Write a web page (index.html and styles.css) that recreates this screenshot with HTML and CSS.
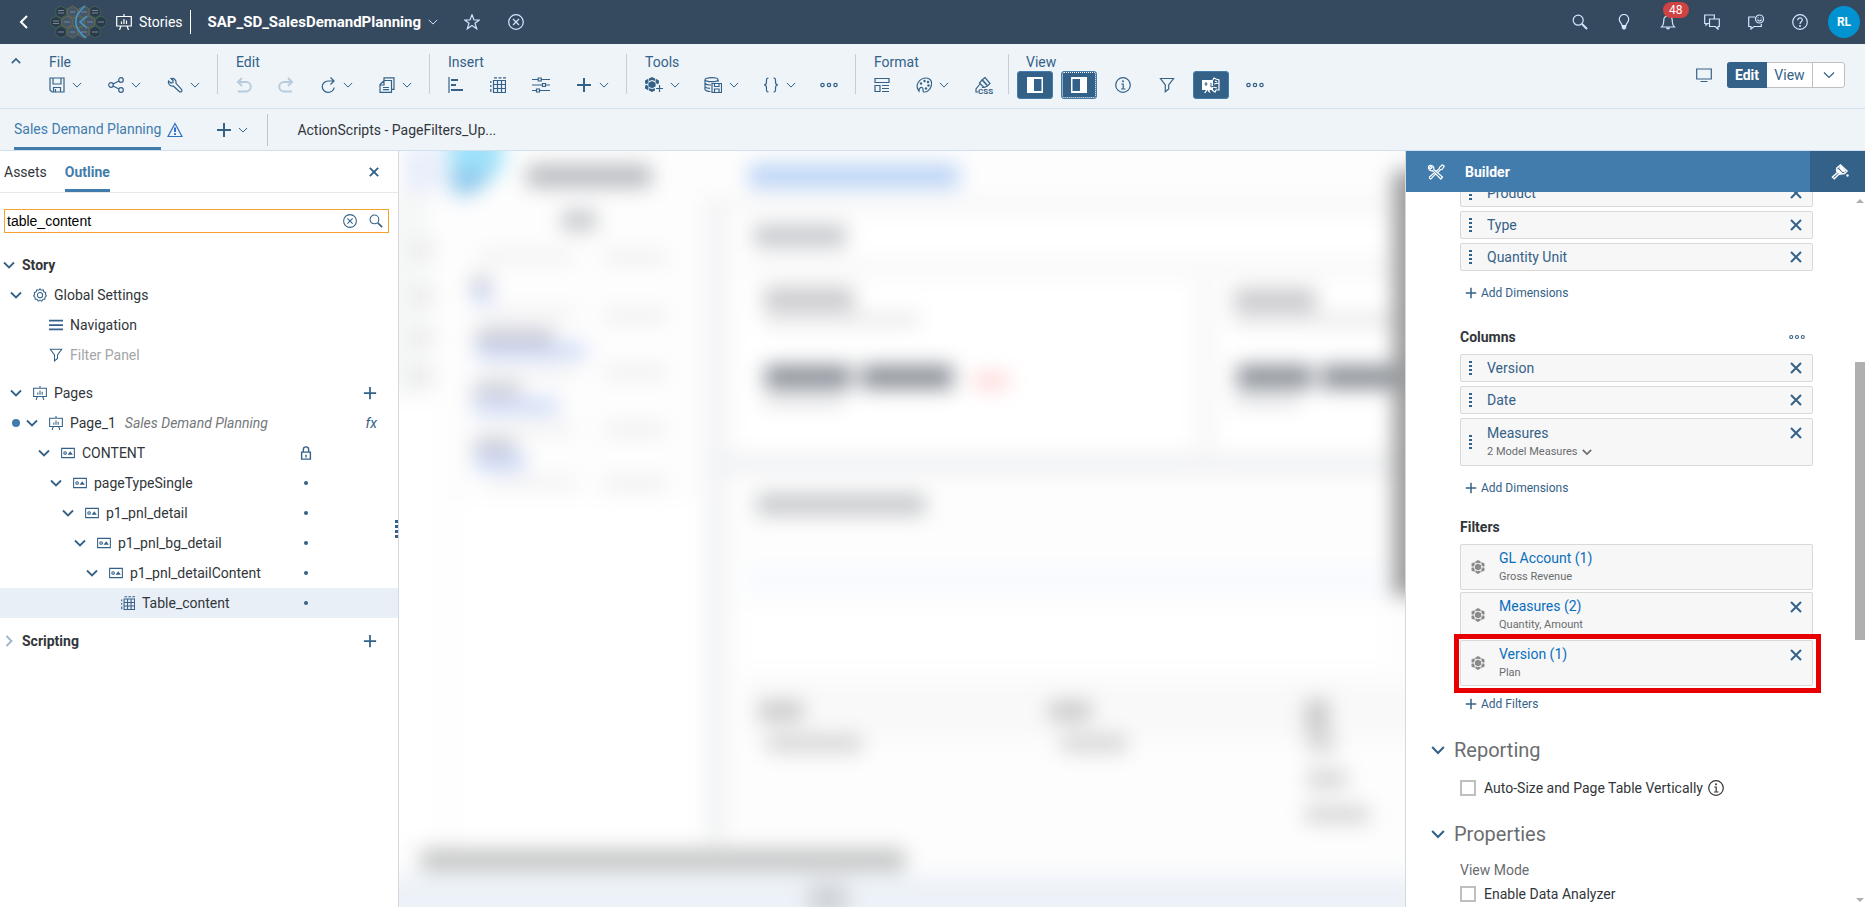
FILE: index.html
```html
<!DOCTYPE html>
<html lang="en">
<head>
<meta charset="utf-8">
<title>SAP_SD_SalesDemandPlanning</title>
<link rel="stylesheet" href="styles.css">
</head>
<body>
<svg class="sprite" aria-hidden="true">
  <symbol id="down" viewBox="0 0 12 12"><path d="M1 3.500l5 5 5-5"/></symbol>
  <symbol id="up" viewBox="0 0 12 12"><path d="M1 8.500l5-5 5 5"/></symbol>
  <symbol id="right" viewBox="0 0 12 12"><path d="M3.500 1l5 5-5 5"/></symbol>
  <symbol id="left" viewBox="0 0 16 16"><path d="M11 2L5 8l6 6"/></symbol>
  <symbol id="x" viewBox="0 0 12 12"><path d="M1 1l10 10M11 1L1 11"/></symbol>
  <symbol id="plus" viewBox="0 0 16 16"><path d="M8 1v14M1 8h14"/></symbol>
  <symbol id="dots" viewBox="0 0 18 16"><circle cx="2.500" cy="8" r="1.700"/><circle cx="9" cy="8" r="1.700"/><circle cx="15.500" cy="8" r="1.700"/></symbol>
  <symbol id="story" viewBox="0 0 16 16"><path d="M.7 2.500h14.600v9.500H.7zM8 0v2.500M5 12l-1.500 4M11 12l1.500 4M5.500 7.500V10M8 5v5M10.500 6.500V10"/></symbol>
  <symbol id="star" viewBox="0 0 16 16"><path d="M8 .8l2 5.200h5.300L11 9.300l1.700 5.500L8 11.500l-4.700 3.300L5 9.300.7 6H6z"/></symbol>
  <symbol id="cancel" viewBox="0 0 16 16"><circle cx="8" cy="8" r="7.300"/><path d="M5 5l6 6M11 5l-6 6"/></symbol>
  <symbol id="save" viewBox="0 0 16 16"><path d="M1 1h14v14H3l-2-2zM4 1v6h8V1M4.500 15v-4.500h7V15M6.500 12v3"/></symbol>
  <symbol id="share" viewBox="0 0 16 16"><circle cx="3" cy="8" r="2.300"/><circle cx="13" cy="3" r="2.300"/><circle cx="13" cy="13" r="2.300"/><path d="M5 7l6-3M5 9l6 3"/></symbol>
  <symbol id="wrench" viewBox="0 0 16 16"><path d="M4 1.500a4 4 0 0 1 5 4.800l5.500 6a1.500 1.500 0 0 1-2.200 2.200l-6-5.500A4 4 0 0 1 1.500 4L4 6l2-.5L6 3.500z"/></symbol>
  <symbol id="undo" viewBox="0 0 16 16"><path d="M6 1L2 5l4 4M2 5h8a4.500 4.500 0 0 1 0 9.500H2"/></symbol>
  <symbol id="redo" viewBox="0 0 16 16"><path d="M10 1l4 4-4 4M14 5H6a4.500 4.500 0 0 0 0 9.500h8"/></symbol>
  <symbol id="refresh" viewBox="0 0 16 16"><path d="M14 4H8a6 5.700 0 1 0 6.200 6.500M10.500 .5L14 4l-3.500 3.500"/></symbol>
  <symbol id="copy" viewBox="0 0 16 16"><path d="M5 3.500V.8h10v11.500h-2.500M8 3.500h4.500v11.800H1V7.500l4-4h3M5 4v4H1M4 10.500h6M4 12.700h6"/></symbol>
  <symbol id="chart" viewBox="0 0 16 16"><path d="M1 0v16"/><path class="fat" d="M3 3h7M3 8h5M3 13h12"/></symbol>
  <symbol id="table" viewBox="0 0 16 16"><path d="M3.500 3.500h12v12h-12zM3.500 7.500h12M3.500 11.500h12M7.500 3.500v12M11.500 3.500v12M4 .8h3M8.500 .8h3M13 .8h3M.8 4v2M.8 8v2M.8 12v3"/></symbol>
  <symbol id="sliders" viewBox="0 0 18 16"><path d="M0 2.500h6M9.500 2.500H18M0 8h10M14 8h4M0 13.500h4M8 13.500h10M6.200 1h3v3h-3zM10.500 6.500h3v3h-3zM4.500 12h3v3h-3z"/></symbol>
  <symbol id="cube" viewBox="0 0 14 14"><g class="solid"><path d="M7 0l2.600 1.400v2.200L7 2.700l-2.600.9V1.400zM7 14l2.600-1.400v-2.200l-2.600.9-2.600-.9v2.200zM.5 3.500l3-1.500.2 2.400-1.500 2.300-1.700-.5zM13.500 3.500l-3-1.500-.2 2.400 1.500 2.300 1.700-.5zM.5 10.500l3 1.500.2-2.400-1.500-2.300-1.700.5zM13.500 10.500l-3 1.500-.2-2.400 1.500-2.300 1.700.5zM7 3.500l3.200 1.700v3.600L7 10.500 3.800 8.800V5.200z"/></g></symbol>
  <symbol id="addcube" viewBox="0 0 18 16"><g class="solid"><path d="M7 0l3 1.500v2.600L7 3 4 4.100V1.500zM7 15l3-1.500v-2.300L7 12l-3-.8v2.300zM0 3.500l3.300-1.700.2 3L2 7.200.2 6.500zM14 3.500l-3.300-1.700-.2 3L12 7.200l1.800-.7zM0 11.500l3.300 1.700.2-3L2 7.800l-1.800.7zM7 4l3.600 1.800v3.700L7 11.200 3.400 9.500V5.800z"/></g><path d="M14.500 8v7M11 11.500h7"/></symbol>
  <symbol id="database" viewBox="0 0 18 16"><ellipse cx="7.500" cy="2.700" rx="6.500" ry="2"/><path d="M1 3v9.500c0 1 3 2 5.500 2M14 3v2M1 6.500c1 1 4 1.600 6 1.500M1 10c1 .8 3 1.300 5 1.300M8 6.500h9.500v9H8zM10.500 6.500v3h4.500v-3M10.500 15.500v-3.500h4.500v3.500"/></symbol>
  <symbol id="braces" viewBox="0 0 16 16"><path d="M5.500 1C3 1 3.500 3 3.500 5S3 8 1 8c2 0 2.500 1 2.500 3s-.5 4 2 4M10.500 1c2.500 0 2 2 2 4s.5 3 2.500 3c-2 0-2.500 1-2.500 3s.5 4-2 4"/></symbol>
  <symbol id="layout" viewBox="0 0 16 16"><path d="M1 1.500h14v4H1zM1 8.500h5v6H1zM8 8.500h7M8 11.500h7M8 14.500h7"/></symbol>
  <symbol id="palette" viewBox="0 0 16 16"><path d="M3 14C-2 8 4 1 10 1c4 0 6 3 5.500 6.500C15 12 12 15 8.500 15c-3 0 0-3.500-2.500-4.500C4 10 3 12 3 14z"/><g class="solid"><circle cx="5" cy="6.500" r="1.200"/><circle cx="8.500" cy="4" r="1.200"/><circle cx="12" cy="5" r="1.200"/><circle cx="12.500" cy="8.500" r="1.200"/><circle cx="10" cy="11.500" r="1.200"/></g></symbol>
  <symbol id="brush" viewBox="0 0 16 16"><path d="M7 3l3-2.500 5 6-2.500 2.500zM7 3L4.500 6 9 10.500 12.500 9M5 7l-4 5v3h3l4-5M8 3.500l4 4.500"/></symbol>
  <symbol id="paint" viewBox="0 0 18 16"><path stroke-width="1.500" d="M9.500 1l6.500 6-2.500 2.500-4 .5-4-4L6 4zM5.500 6.500l1 2L1.500 13l1.800 1.800L8 10l1.500.5M8.500 3.500l4 4.500"/><path class="fat" d="M9 2.500l5 5M6.500 5.500l4 4"/><circle class="solid" cx="16.500" cy="11.500" r="1.200"/></symbol>
  <symbol id="info" viewBox="0 0 16 16"><circle cx="8" cy="8" r="7.300"/><path d="M6.300 7H8.200v5M6 12h4.500"/><circle class="solid" cx="8" cy="4.200" r="1"/></symbol>
  <symbol id="filter" viewBox="0 0 16 16"><path d="M1.500 1.500h13L9.700 8v4L6.300 14.800V8z"/></symbol>
  <symbol id="paneL" viewBox="0 0 18 16"><path class="solid" d="M1 0h16v16H1zM8 2v12h7.500V2z" fill-rule="evenodd"/></symbol>
  <symbol id="paneR" viewBox="0 0 18 16"><path class="solid" d="M1 0h16v16H1zM2.500 2v12H10V2z" fill-rule="evenodd"/></symbol>
  <symbol id="present" viewBox="0 0 18 16"><path class="solid" d="M0 3h11v10H7.500l1 3-2-1-1-2-2 3H2l2-3H0z"/><path d="M11 3l1-2 2 1 3 1v10h-3l-1 2-3-2M12 7l5-1M11 10l4 1M13 4l2 1"/><path class="cut" d="M4 5v4M2.500 7h3M9 6v4l3-1"/></symbol>
  <symbol id="monitor" viewBox="0 0 16 16"><path d="M.7 2h14.600v10H.7zM4.500 14.500h7"/></symbol>
  <symbol id="search" viewBox="0 0 16 16"><circle cx="6.200" cy="6.200" r="5"/><path class="fat" d="M10 10l5 5"/></symbol>
  <symbol id="bulb" viewBox="0 0 16 16"><path d="M6 11.500C6 9 3.300 8.500 3.300 5.200a4.700 4.700 0 0 1 9.400 0C12.700 8.500 10 9 10 11.500z"/><path class="solid" d="M5.800 11h4.400v3L9 15.500H7L5.800 14z"/></symbol>
  <symbol id="bell" viewBox="0 0 16 16"><path d="M1.500 13C4 11 3.500 9 3.800 6a4.200 4.200 0 0 1 8.400 0c.3 3-.2 5 2.300 7z"/><path class="solid" d="M6 13.500h4a2 2 0 0 1-4 0z"/></symbol>
  <symbol id="chat" viewBox="0 0 16 16"><path d="M5 9.500H3.500L2 11V9.500H.7V1h9.600v3.500M5.500 5h9.800v7.500H14v2.700l-2.700-2.700H5.500z"/></symbol>
  <symbol id="feedback" viewBox="0 0 16 16"><path d="M7 3H.7v9.500H3V15l3-2.500h7.300V10"/><circle cx="11.500" cy="5" r="4"/><path d="M9.500 5.500c.8 2 3.200 2 4 0M10 3.500v.8M13 3.500v.8"/></symbol>
  <symbol id="help" viewBox="0 0 16 16"><circle cx="8" cy="8" r="7.300"/><path d="M5.700 6.200C5.700 3 10.500 3.200 10.300 6 10.200 7.800 8 7.700 8 10"/><circle class="solid" cx="8" cy="12" r="1"/></symbol>
  <symbol id="warn" viewBox="0 0 16 16"><path d="M8 1.500l7 13H1z"/><path class="fat" d="M8 5.500v4.500M8 11.300v1.700"/></symbol>
  <symbol id="gear" viewBox="0 0 16 16"><path d="M8 1l1.500 1.600 2.200-.5.700 2.200 2.100.8-.4 2.200L15.300 9l-1.600 1.500-.1 2.200-2.200.3L9.900 15 8 13.800 6.100 15l-1.500-2-2.200-.3-.1-2.200L.7 9l1.200-1.700-.4-2.200 2.100-.8.700-2.200 2.200.5z"/><circle cx="8" cy="8.200" r="3"/></symbol>
  <symbol id="menu" viewBox="0 0 16 16"><path class="fat" d="M0 3h16M0 8h16M0 13h16"/></symbol>
  <symbol id="panel" viewBox="0 0 16 16"><path d="M.7 2.700h14.600v10.600H.7z"/><circle cx="4.700" cy="8" r="1.500"/><path class="solid" d="M7.500 10L10.500 6l3 4z"/></symbol>
  <symbol id="lock" viewBox="0 0 12 16"><path d="M1 7h10v8H1zM3 7V4a3 3 0 0 1 6 0v3M6 10v3"/></symbol>
  <symbol id="tools" viewBox="0 0 18 16"><path d="M2.500 1.500a3.300 3.300 0 0 1 4.300 4l8.700 7.500-1.700 2-8.300-8.300a3.300 3.300 0 0 1-4-4L3.500 5 5 3.700zM15.500 .8l1.700 1.500-2 3-1.500.3-3 3M2 13.500l5.500-5M3.800 15.200l5-5.500M2 13.500l1.800 1.700M15.500 .8l-3 2.500-.2 1.500-3 2.500"/></symbol>
</svg>

<header class="shell">
  <button class="ib back" aria-label="Back"><svg class="i bold"><use href="#left"/></svg></button>
  <svg class="logo" viewBox="0 0 57 34" aria-hidden="true">
    <defs><path id="hex" d="M0-6l5.200 3v6L0 6l-5.200-3v-6z"/></defs>
    <g class="cells"><use href="#hex" x="11" y="7"/><use href="#hex" x="45" y="7"/><use href="#hex" x="6" y="17"/><use href="#hex" x="51" y="17"/><use href="#hex" x="11" y="27"/><use href="#hex" x="45" y="27"/></g>
    <g class="inner"><use href="#hex" x="22.500" y="7"/><use href="#hex" x="34" y="7"/><use href="#hex" x="17" y="17"/><use href="#hex" x="28" y="17"/><use href="#hex" x="39.500" y="17"/><use href="#hex" x="22.500" y="27"/><use href="#hex" x="34" y="27"/></g>
    <path class="labels" d="M8 5.500h6M8 8h6M20 7h5M31 7h6M42 5.500h6M42 8h6M3 16h6M3 18.500h6M14 17h6M37 17h6M48 17h6M8 27h6M20 27h5M31 27h6M42 27h6"/>
    <path class="strand" d="M35 1C23 11 22 22 36 33M37 11l-7 6 7 6"/>
  </svg>
  <a class="crumb" href="#"><svg class="i"><use href="#story"/></svg>Stories</a>
  <h1 class="title">SAP_SD_SalesDemandPlanning</h1>
  <button class="ib after" aria-label="Story menu"><svg class="chev"><use href="#down"/></svg></button>
  <button class="ib fav" aria-label="Favorite"><svg class="i"><use href="#star"/></svg></button>
  <button class="ib" aria-label="Close"><svg class="i"><use href="#cancel"/></svg></button>
  <nav class="actions" aria-label="Shell">
    <button class="ib" aria-label="Search"><svg class="i"><use href="#search"/></svg></button>
    <button class="ib" aria-label="Tips"><svg class="i"><use href="#bulb"/></svg></button>
    <button class="ib bell" aria-label="Notifications"><svg class="i"><use href="#bell"/></svg><span class="badge">48</span></button>
    <button class="ib" aria-label="Discussions"><svg class="i"><use href="#chat"/></svg></button>
    <button class="ib" aria-label="Feedback"><svg class="i"><use href="#feedback"/></svg></button>
    <button class="ib" aria-label="Help"><svg class="i"><use href="#help"/></svg></button>
    <button class="avatar">RL</button>
  </nav>
</header>

<div class="toolbar">
  <button class="ib collapse" aria-label="Collapse toolbar"><svg class="chev bold"><use href="#up"/></svg></button>
  <section class="group"><h2>File</h2><div class="tools">
    <button aria-label="Save"><svg class="i"><use href="#save"/></svg><svg class="chev"><use href="#down"/></svg></button>
    <button aria-label="Share"><svg class="i"><use href="#share"/></svg><svg class="chev"><use href="#down"/></svg></button>
    <button aria-label="Settings"><svg class="i"><use href="#wrench"/></svg><svg class="chev"><use href="#down"/></svg></button>
  </div></section>
  <section class="group"><h2>Edit</h2><div class="tools">
    <button disabled aria-label="Undo"><svg class="i bold"><use href="#undo"/></svg></button>
    <button disabled aria-label="Redo"><svg class="i bold"><use href="#redo"/></svg></button>
    <button aria-label="Refresh"><svg class="i"><use href="#refresh"/></svg><svg class="chev"><use href="#down"/></svg></button>
    <button aria-label="Copy"><svg class="i"><use href="#copy"/></svg><svg class="chev"><use href="#down"/></svg></button>
  </div></section>
  <section class="group"><h2>Insert</h2><div class="tools">
    <button aria-label="Chart"><svg class="i"><use href="#chart"/></svg></button>
    <button aria-label="Table"><svg class="i"><use href="#table"/></svg></button>
    <button aria-label="Input control"><svg class="i wide"><use href="#sliders"/></svg></button>
    <button aria-label="Add"><svg class="i bold"><use href="#plus"/></svg><svg class="chev"><use href="#down"/></svg></button>
  </div></section>
  <section class="group"><h2>Tools</h2><div class="tools tight">
    <button aria-label="Add dimension"><svg class="i wide"><use href="#addcube"/></svg><svg class="chev"><use href="#down"/></svg></button>
    <button aria-label="Data"><svg class="i wide"><use href="#database"/></svg><svg class="chev"><use href="#down"/></svg></button>
    <button aria-label="Scripts"><svg class="i"><use href="#braces"/></svg><svg class="chev"><use href="#down"/></svg></button>
    <button aria-label="More tools"><svg class="i wide"><use href="#dots"/></svg></button>
  </div></section>
  <section class="group"><h2>Format</h2><div class="tools">
    <button aria-label="Layout"><svg class="i"><use href="#layout"/></svg></button>
    <button aria-label="Theme"><svg class="i"><use href="#palette"/></svg><svg class="chev"><use href="#down"/></svg></button>
    <button class="css" aria-label="CSS"><svg class="i"><use href="#brush"/></svg><span>CSS</span></button>
  </div></section>
  <section class="group last"><h2>View</h2><div class="tools toggles">
    <button class="on" aria-label="Left panel" aria-pressed="true"><svg class="i wide"><use href="#paneL"/></svg></button>
    <button class="on focus" aria-label="Right panel" aria-pressed="true"><svg class="i wide"><use href="#paneR"/></svg></button>
    <button aria-label="Info"><svg class="i"><use href="#info"/></svg></button>
    <button aria-label="Filter"><svg class="i"><use href="#filter"/></svg></button>
    <button class="on" aria-label="Story preview" aria-pressed="true"><svg class="i wide"><use href="#present"/></svg></button>
    <button aria-label="More views"><svg class="i wide"><use href="#dots"/></svg></button>
  </div></section>
  <div class="mode">
    <button class="ib" aria-label="Device preview"><svg class="i"><use href="#monitor"/></svg></button>
    <div class="seg"><button class="on">Edit</button><button>View</button><button class="drop" aria-label="View options"><svg class="chev"><use href="#down"/></svg></button></div>
  </div>
</div>

<nav class="tabs" aria-label="Story pages">
  <a class="tab active" href="#">Sales Demand Planning</a>
  <svg class="i warn"><use href="#warn"/></svg>
  <button class="ib addtab" aria-label="Add page"><svg class="i bold"><use href="#plus"/></svg><svg class="chev"><use href="#down"/></svg></button>
  <a class="tab script" href="#">ActionScripts - PageFilters_Up...</a>
</nav>

<main class="work">
  <aside class="outline">
    <div class="ptabs">
      <a href="#">Assets</a><a class="active" href="#">Outline</a>
      <button class="ib" aria-label="Close panel"><svg class="close"><use href="#x"/></svg></button>
    </div>
    <div class="find">
      <input type="text" aria-label="Search outline" value="table_content">
      <button class="ib" aria-label="Clear"><svg class="ti"><use href="#cancel"/></svg></button>
      <button class="ib" aria-label="Search"><svg class="ti"><use href="#search"/></svg></button>
    </div>
    <ul class="tree">
      <li class="root"><svg class="tc"><use href="#down"/></svg><b>Story</b></li>
      <li class="l0"><svg class="tc"><use href="#down"/></svg><svg class="ti"><use href="#gear"/></svg><span>Global Settings</span></li>
      <li class="l1"><svg class="tc none"></svg><svg class="ti"><use href="#menu"/></svg><span>Navigation</span></li>
      <li class="l1"><svg class="tc none"></svg><svg class="ti"><use href="#filter"/></svg><span class="off">Filter Panel</span></li>
      <li class="l0 apart"><svg class="tc"><use href="#down"/></svg><svg class="ti"><use href="#story"/></svg><span>Pages</span><button class="ib end" aria-label="Add page"><svg class="ti bold"><use href="#plus"/></svg></button></li>
      <li class="l1 page"><i class="changed"></i><svg class="tc"><use href="#down"/></svg><svg class="ti"><use href="#story"/></svg><span>Page_1</span><em>Sales Demand Planning</em><button class="ib end fx">fx</button></li>
      <li class="l2"><svg class="tc"><use href="#down"/></svg><svg class="ti"><use href="#panel"/></svg><span>CONTENT</span><svg class="lock"><use href="#lock"/></svg></li>
      <li class="l3"><svg class="tc"><use href="#down"/></svg><svg class="ti"><use href="#panel"/></svg><span>pageTypeSingle</span><i class="dot"></i></li>
      <li class="l4"><svg class="tc"><use href="#down"/></svg><svg class="ti"><use href="#panel"/></svg><span>p1_pnl_detail</span><i class="dot"></i></li>
      <li class="l5"><svg class="tc"><use href="#down"/></svg><svg class="ti"><use href="#panel"/></svg><span>p1_pnl_bg_detail</span><i class="dot"></i></li>
      <li class="l6"><svg class="tc"><use href="#down"/></svg><svg class="ti"><use href="#panel"/></svg><span>p1_pnl_detailContent</span><i class="dot"></i></li>
      <li class="l7 sel"><svg class="tc none"></svg><svg class="ti"><use href="#table"/></svg><span>Table_content</span><i class="dot"></i></li>
      <li class="root apart"><svg class="tc pale"><use href="#right"/></svg><b>Scripting</b><button class="ib end" aria-label="Add script"><svg class="ti bold"><use href="#plus"/></svg></button></li>
    </ul>
    <div class="grip"><i></i><i></i><i></i><i></i></div>
  </aside>

  <div class="canvas">
    <svg viewBox="0 0 1006 756" preserveAspectRatio="xMinYMin slice" role="img" aria-label="Story page, blurred">
      <defs><filter id="soft" filterUnits="userSpaceOnUse" x="-60" y="-60" width="1130" height="880" color-interpolation-filters="sRGB"><feGaussianBlur stdDeviation="10"/></filter></defs>
      <rect width="1006" height="756" fill="#fdfdfd"/>
      <g filter="url(#soft)">
        <path fill="#fdfdfd" d="M-60-60h1130v880H-60z"/>
        <path fill="#f6f7f7" d="M-30 40h60v205h-60z"/>
        <path fill="#fff" d="M60 350h240v350H60zM-30 250h70v440h-70z"/>
        <path fill="#f1f2f4" d="M308 45h18v645h-18zM320 303h750v20H320z"/>
        <path fill="#f7f7f7" d="M320 46h750v15H320zM350 110h710v12H350z"/>
        <path fill="#f9f9f9" d="M350 530h710v60H350z"/>
        <path fill="#fff" d="M340 132h455v166H340zM340 65h720v40H340zM345 460h640v55H345z"/>
        <path fill="#f7f7f7" d="M798 130h18v170h-18z"/>
        <path fill="#fff" d="M820 132h250v166H820z"/>
        <path fill="#f8fafe" d="M350 415h710v28H350z"/>
        <path fill="#e9eefb" d="M5-5h40v45H5z"/>
        <path fill="#9fe2fa" d="M46-30h58V16L90 30 54 32z"/>
        <path fill="#8fc8ec" d="M50 18h38v14L72 44H55z"/>
        <path fill="#b7b9be" d="M128 14h124v22H128z"/>
        <path fill="#bcd4f6" d="M350 13h210v24H350z"/>
        <path fill="#c6c8cc" d="M163 59h34v21h-34zM355 74h92v22h-92z"/>
        <path fill="#e9e9eb" d="M80 102h95v7H80zM205 102h62v9h-62zM80 160h95v7H80zM205 160h62v9h-62zM80 217h95v7H80zM205 217h62v9h-62zM80 274h95v7H80zM205 274h62v9h-62zM90 328h85v7H90zM205 328h62v9h-62z"/>
        <path fill="#c8c9d2" d="M73 125h18v13H73zM77 178h78v15H77zM74 232h48v13H74zM74 288h42v13H74z"/>
        <path fill="#c8d5f5" d="M74 138h18v14H74zM77 193h110v14H77zM74 248h85v14H74zM76 302h50v17H76z"/>
        <path fill="#e6e6e6" d="M12 92h22v14H12zM12 138h22v14H12zM12 180h22v14H12zM10 218h24v15H10z"/>
        <path fill="#c8c8cc" d="M365 137h90v22h-90zM835 138h82v22h-82z"/>
        <path fill="#dedfe0" d="M365 164h155v9H365zM835 164h165v9H835z"/>
        <path fill="#8c9199" d="M366 214h86v24h-86zM462 214h92v24h-92zM838 214h75v24h-75zM922 214h90v24h-90z"/>
        <path fill="#ffd0d0" d="M575 223h34v14h-34z"/>
        <path fill="#dddee0" d="M365 246h80v9H365zM835 246h65v9h-65z"/>
        <path fill="#c5c7ca" d="M358 343h168v21H358z"/>
        <path fill="#c9c9c9" d="M360 550h44v20H360zM650 550h42v20H650zM906 548h24v34h-24z"/>
        <path fill="#d4d4d4" d="M368 584h95v17H368zM662 584h66v17H662zM908 584h28v17H908zM908 619h40v18h-40zM906 655h64v17h-64z"/>
        <path fill="#edf2f8" d="M-50 724h1110v80H-50z"/>
        <path fill="#c3c4c4" d="M22 698h484v22H22z"/>
        <path fill="#d0d3d8" d="M410 732h38v32h-38z"/>
        <path fill="#9c9c9c" d="M994 20h56v425h-56z"/>
      </g>
    </svg>
  </div>

  <aside class="builder">
    <div class="bhead">
      <svg class="i wide"><use href="#tools"/></svg><h2>Builder</h2>
      <button aria-label="Styling"><svg class="i wide"><use href="#paint"/></svg></button>
    </div>
    <div class="bbody">
      <div class="form">
        <ul class="dims top">
          <li><i class="drag"></i><span>Product</span><button class="ib" aria-label="Remove Product"><svg class="del"><use href="#x"/></svg></button></li>
          <li><i class="drag"></i><span>Type</span><button class="ib" aria-label="Remove Type"><svg class="del"><use href="#x"/></svg></button></li>
          <li><i class="drag"></i><span>Quantity Unit</span><button class="ib" aria-label="Remove Quantity Unit"><svg class="del"><use href="#x"/></svg></button></li>
        </ul>
        <button class="add"><svg class="ps"><use href="#plus"/></svg>Add Dimensions</button>
        <div class="sub"><h3>Columns</h3><button class="ib" aria-label="Column options"><svg class="i"><use href="#dots"/></svg></button></div>
        <ul class="dims">
          <li><i class="drag"></i><span>Version</span><button class="ib" aria-label="Remove Version"><svg class="del"><use href="#x"/></svg></button></li>
          <li><i class="drag"></i><span>Date</span><button class="ib" aria-label="Remove Date"><svg class="del"><use href="#x"/></svg></button></li>
          <li class="tall"><i class="drag"></i><span>Measures<small>2 Model Measures <svg class="sc"><use href="#down"/></svg></small></span><button class="ib" aria-label="Remove Measures"><svg class="del"><use href="#x"/></svg></button></li>
        </ul>
        <button class="add"><svg class="ps"><use href="#plus"/></svg>Add Dimensions</button>
        <div class="sub"><h3>Filters</h3></div>
        <ul class="filters">
          <li><svg class="cube"><use href="#cube"/></svg><div><a href="#">GL Account (1)</a><small>Gross Revenue</small></div></li>
          <li><svg class="cube"><use href="#cube"/></svg><div><a href="#">Measures (2)</a><small>Quantity, Amount</small></div><button class="ib" aria-label="Remove Measures filter"><svg class="del"><use href="#x"/></svg></button></li>
          <li class="marked"><svg class="cube"><use href="#cube"/></svg><div><a href="#">Version (1)</a><small>Plan</small></div><button class="ib" aria-label="Remove Version filter"><svg class="del"><use href="#x"/></svg></button></li>
        </ul>
        <button class="add"><svg class="ps"><use href="#plus"/></svg>Add Filters</button>
        <h2 class="sect"><svg class="hc"><use href="#down"/></svg>Reporting</h2>
        <div class="opt"><input type="checkbox" id="autosize"><label for="autosize">Auto-Size and Page Table Vertically</label><svg class="i about"><use href="#info"/></svg></div>
        <h2 class="sect second"><svg class="hc"><use href="#down"/></svg>Properties</h2>
        <p class="vm">View Mode</p>
        <div class="opt"><input type="checkbox" id="analyzer"><label for="analyzer">Enable Data Analyzer</label></div>
        <div class="opt"><input type="checkbox" aria-label="Enable Explorer"></div>
      </div>
      <div class="scroll"><i class="arr"></i><div class="track"><i class="thumb"></i></div><i class="arr dn"></i></div>
    </div>
  </aside>
</main>
</body>
</html>
```
FILE: styles.css
```css
* { box-sizing: border-box; }
html, body { height: 100%; }
body { margin: 0; display: flex; flex-direction: column; overflow: hidden; background: #fff; color: #32363a; font: 14px/20px Roboto, "Noto Sans", sans-serif; }
h1, h2, h3, p, ul { margin: 0; padding: 0; font-size: 14px; font-weight: 400; }
ul { list-style: none; }
a { color: inherit; text-decoration: none; }
button { margin: 0; padding: 0; border: 0; background: none; color: inherit; font: inherit; display: flex; align-items: center; justify-content: center; }
svg { flex: none; fill: none; stroke: currentColor; stroke-width: 1.2; }
.sprite { position: absolute; width: 0; height: 0; }
.solid { fill: currentColor; stroke: none; }
.fat { stroke-width: 2; }
.cut { stroke: #346187; stroke-width: 1; }
.i { width: 16px; height: 16px; }
.wide { width: 18px; }
.bold { stroke-width: 2; }
.chev { width: 10px; height: 10px; }

.shell { flex: none; display: flex; align-items: center; height: 44px; padding: 0 5px 0 16px; background: #354a5f; color: #fff; }
.logo { width: 57px; height: 34px; margin-left: 18px; stroke-width: 1; }
.cells { fill: #2a3a4c; stroke: #3d6350; }
.inner { fill: #44566a; stroke: #6b6a4e; }
.labels { stroke: #7b8793; }
.strand { stroke: #3d9fd6; stroke-width: 1.5; }
.crumb { display: flex; align-items: center; gap: 7px; margin-left: 9px; padding-right: 7px; line-height: 24px; border-right: 1px solid #fff; }
.title { margin-left: 17px; font-size: 15px; font-weight: 700; }
.after { margin-left: 7px; }
.fav { margin: 0 28px 0 26px; }
.shell .ib { color: #d1e8ff; }
.shell .back { color: #fff; }
.actions { display: flex; align-items: center; gap: 12px; margin-left: auto; }
.actions .ib { width: 32px; height: 32px; }
.bell { position: relative; }
.badge { position: absolute; left: 11px; top: -4px; padding: 0 6px; border-radius: 8px; background: #d04343; color: #fff; font: 12px/16px Roboto, sans-serif; }
.avatar { width: 32px; height: 32px; border-radius: 50%; background: #0092d1; font-size: 12px; font-weight: 700; }

.toolbar { flex: none; display: flex; height: 65px; background: #eff4f9; color: #346187; border-bottom: 1px solid #d1e0ee; }
.collapse { width: 31px; height: 34px; }
.group { padding: 0 17px 0 18px; margin: 10px 0 14px; height: 40px; border-right: 1px solid #c8cdd3; }
.group h2 { height: 16px; line-height: 16px; }
.tools { display: flex; align-items: center; gap: 26px; height: 28px; margin-top: 1px; }
.tools button { gap: 7px; height: 28px; }
.tools.tight { gap: 24px; }
.tools button:disabled { color: #b8cbdc; }
.css { position: relative; }
.css span { position: absolute; left: 3px; bottom: 4px; background: #eff4f9; font-size: 8px; line-height: 7px; font-weight: 700; }
.last { border: 0; padding: 0 0 0 8px; }
.last h2 { padding-left: 9px; }
.tools.toggles { gap: 8px; }
.toggles button { width: 36px; }
.toggles .on { background: #346187; color: #fff; border: 1px solid #427cac; border-radius: 3px; }
.toggles .focus { outline: 1px dotted #fff; outline-offset: -2px; }
.mode { display: flex; align-items: center; gap: 15px; margin: 18px 20px 20px auto; height: 26px; }
.seg { display: flex; height: 26px; border: 1px solid #bfbfbf; border-radius: 3px; background: #fff; }
.seg button { width: 45px; }
.seg .on { width: 40px; margin: -1px 0 -1px -1px; background: #346187; color: #fff; border-radius: 3px 0 0 3px; font-weight: 700; }
.seg .drop { width: 32px; border-left: 1px solid #bfbfbf; }
.seg .chev { width: 12px; height: 12px; }

.tabs { flex: none; display: flex; align-items: center; height: 42px; padding-left: 14px; background: #eff4f9; border-bottom: 1px solid #d1e0ee; }
.tab.active { height: 41px; line-height: 41px; color: #427cac; border-bottom: 3px solid #427cac; }
.warn { margin-left: 6px; color: #2f6fc4; }
.addtab { gap: 6px; margin-left: 33px; padding-right: 19px; height: 32px; color: #346187; border-right: 1px solid #bfc5cc; }
.script { margin-left: 29px; }

.work { flex: 1; display: flex; min-height: 0; }
.outline { position: relative; flex: none; width: 399px; border-right: 1px solid #d5d9dd; }
.ptabs { display: flex; gap: 18px; height: 42px; padding: 0 19px 0 4px; line-height: 42px; border-bottom: 1px solid #e8e8e8; }
.ptabs .active { color: #427cac; font-weight: 700; border-bottom: 3px solid #427cac; }
.ptabs button { margin-left: auto; color: #346187; }
.close { width: 10px; height: 10px; stroke-width: 2.2; }
.find { display: flex; align-items: center; gap: 12px; height: 24px; margin: 16px 9px 17px 4px; padding-right: 5px; border: 1px solid #f5a32d; color: #346187; }
.find input { flex: 1; min-width: 0; padding: 0 2px; border: 0; outline: 0; color: #000; background: none; font: 14px "Liberation Sans", sans-serif; }
.ti { width: 14px; height: 14px; color: #346187; }
.tc { width: 12px; height: 12px; margin-right: 11px; stroke-width: 1.800; color: #346187; }
.none { visibility: hidden; }
.pale { color: #9db3c9; }
.tree li { position: relative; display: flex; align-items: center; height: 30px; padding-right: 21px; }
.tree .apart { margin-top: 8px; }
.tree span { margin-left: 7px; }
.tree .root { padding-left: 3px; }
.root .tc { margin-right: 7px; }
.tree .l0 { padding-left: 10px; }
.tree .l1 { padding-left: 26px; }
.tree .l2 { padding-left: 38px; }
.tree .l3 { padding-left: 50px; }
.tree .l4 { padding-left: 62px; }
.tree .l5 { padding-left: 74px; }
.tree .l6 { padding-left: 86px; }
.tree .l7 { padding-left: 98px; }
.tree .page { padding-left: 12px; }
.changed { width: 8px; height: 8px; margin-right: 6px; border-radius: 50%; background: #427cac; }
.tree em { margin-left: 9px; color: #74777a; }
.off { color: #a3a5a7; }
.end { margin-left: auto; color: #346187; }
.fx { font-style: italic; }
.lock { width: 12px; height: 14px; margin: 0 65px 0 auto; stroke-width: 1.600; color: #346187; }
.dot { width: 4px; height: 4px; margin: 0 69px 0 auto; border-radius: 50%; background: #346187; }
.sel { background: #e8eff7; }
.grip { position: absolute; right: 0; top: 0; bottom: 0; display: flex; flex-direction: column; justify-content: center; gap: 2px; }
.grip i { width: 3px; height: 3px; background: #346187; }

.canvas { flex: 1; min-width: 0; overflow: hidden; }
.canvas svg { display: block; width: 100%; height: 100%; stroke: none; }

.builder { flex: none; display: flex; flex-direction: column; width: 460px; border-left: 1px solid #d5d9dd; background: #fff; }
.bhead { flex: none; display: flex; align-items: center; height: 41px; padding-left: 21px; background: #427cac; color: #fff; }
.bhead h2 { margin-left: 20px; font-weight: 700; }
.bhead button { width: 55px; height: 41px; margin-left: auto; padding-left: 4px; background: #346187; }
.bbody { flex: 1; display: flex; min-height: 0; overflow: hidden; }
.form { flex: 1; padding: 0 42px 0 54px; }
.dims { display: flex; flex-direction: column; gap: 4px; }
.top { margin-top: -13px; }
.dims li, .filters li { display: flex; align-items: center; min-height: 28px; padding-right: 10px; background: #f7f7f7; border: 1px solid #d9d9d9; border-radius: 2px; color: #346187; }
.dims span { flex: 1; margin-left: 15px; }
.dims .tall { height: 48px; }
.tall .ib, .filters .ib { align-self: flex-start; margin-top: 8px; }
.dims small, .filters small { display: block; font-size: 11px; line-height: 18px; color: #6a6d70; }
.drag { width: 3px; height: 14px; margin-left: 8px; background: repeating-linear-gradient(#346187 0 2px, transparent 2px 4px); }
.del { width: 12px; height: 12px; stroke-width: 2; }
.sc { width: 10px; height: 10px; margin-left: 2px; stroke-width: 2; vertical-align: -2px; }
.add { gap: 4px; height: 20px; margin: 12px 0 0 5px; color: #346187; font-size: 12px; }
.ps { width: 12px; height: 12px; stroke-width: 2; }
.sub { display: flex; align-items: center; justify-content: space-between; height: 20px; margin: 24px 8px 7px 0; color: #346187; }
.sub h3 { font-weight: 700; color: #32363a; }
.add + .sub:has(+ .filters) { margin-top: 19px; }
.filters { display: flex; flex-direction: column; gap: 2px; }
.filters li { position: relative; height: 46px; }
.filters a { color: #0a6ebd; }
.filters div { flex: 1; margin-left: 14px; }
.cube { width: 14px; height: 14px; margin-left: 10px; color: #8a8a8a; }
.marked::after { content: ""; position: absolute; inset: -7px -9px -8px -7px; border: 5px solid #e80000; }
.filters + .add { margin-top: 8px; }
.sect { display: flex; align-items: center; gap: 9px; height: 28px; margin: 22px 0 16px -29px; font-size: 20px; color: #6a6d70; }
.hc { width: 14px; height: 14px; stroke-width: 1.800; color: #346187; }
.opt { display: flex; align-items: center; height: 16px; margin-bottom: 6px; }
.opt input { appearance: none; flex: none; width: 16px; height: 16px; margin: 0 8px 0 0; border: 2px solid #bfbfbf; background: #fff; }
.about { margin-left: 5px; }
.second { margin: 24px 0 12px -29px; }
.vm { height: 20px; margin-bottom: 6px; color: #6a6d70; }
.scroll { display: flex; flex-direction: column; width: 10px; padding: 7px 0 5px; }
.arr { align-self: center; border: 4px solid transparent; border-top: 0; border-bottom-color: #b0b0b0; }
.dn { transform: rotate(180deg); }
.track { flex: 1; }
.thumb { display: block; height: 40%; margin-top: 159px; background: #b0b0b0; }
```
